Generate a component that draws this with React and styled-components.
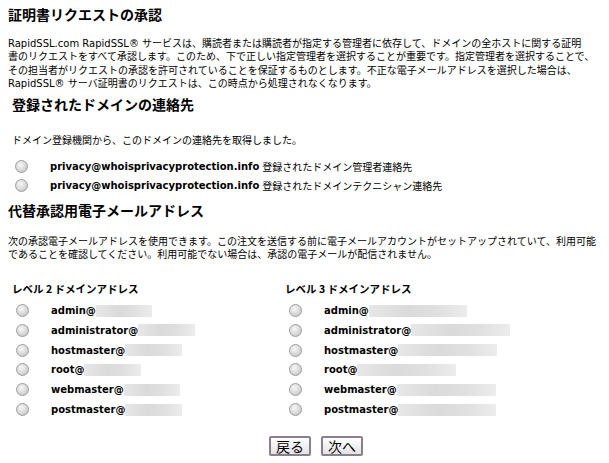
import React from 'react'
import styled, { createGlobalStyle } from 'styled-components'

/***************************************
  GLOBAL
***************************************/

const GlobalStyle = createGlobalStyle`
  html, body {
    margin: 0;
    padding: 0;
    background: #FFFFFF;
  }
  body {
    font-family: "DejaVu Sans", "Noto Sans CJK JP", sans-serif;
    font-size: 10px;
    color: #000000;
  }
`

/***************************************
  COMPONENTS
***************************************/

const Page = styled.div`
  width: 609px;
  height: 463px;
  padding: 6px 8px 0 8px;
  box-sizing: border-box;
`

const Heading = styled.div`
  font-family: "Noto Sans CJK JP", sans-serif;
  font-weight: 700;
  font-size: 14px;
  line-height: 17px;
  margin-top: ${(p) => p.$top || 0}px;
  padding-left: ${(p) => p.$indent || 0}px;
  white-space: nowrap;
`

const Para = styled.div`
  line-height: ${(p) => p.$lh || 13.4}px;
  margin-top: ${(p) => p.$top || 0}px;
  padding-left: ${(p) => p.$indent || 0}px;
  white-space: nowrap;
`

const RadioList = styled.div`
  display: flex;
  flex-direction: column;
  margin-top: ${(p) => p.$top || 0}px;
`

const Row = styled.div`
  display: flex;
  align-items: center;
  height: ${(p) => p.$h || 19}px;
  white-space: nowrap;
`

const Radio = styled.span`
  flex: none;
  width: 11px;
  height: 11px;
  border-radius: 50%;
  border: 1px solid #9d9d9d;
  background: radial-gradient(circle at 40% 35%, #f7f7f7 0%, #d8d8d8 55%, #bcbcbc 100%);
  margin-left: ${(p) => p.$left || 8}px;
  margin-right: ${(p) => p.$right || 23}px;
`

const Email = styled.span`
  font-weight: 700;
  color: #000000;
`

const Note = styled.span`
  margin-left: 3px;
`

const Blur = styled.span`
  display: inline-block;
  width: ${(p) => p.$w}px;
  height: 12px;
  vertical-align: middle;
  background: linear-gradient(90deg, #e7e7e7, #dadada 40%, #e0e0e0 70%, #ececec);
  filter: blur(0.7px);
`

const Columns = styled.div`
  display: grid;
  grid-template-columns: 273px 1fr;
  margin-top: 21px;
`

const ColTitle = styled.div`
  font-family: "Noto Sans CJK JP", "DejaVu Sans", sans-serif;
  font-weight: 700;
  font-size: 10.5px;
  line-height: 14px;
  padding-left: 4px;
  margin-bottom: 5px;
  white-space: nowrap;
`

const Actions = styled.div`
  display: flex;
  justify-content: center;
  gap: 10px;
  margin-top: 17px;
  padding-left: 23px;
`

const Button = styled.button`
  height: 20px;
  padding: 0 5px;
  border: 2px solid #8d7e8f;
  border-radius: 2px;
  background: linear-gradient(#ffffff, #f2f2f2 50%, #e2e2e2);
  font-family: "Noto Sans CJK JP", sans-serif;
  font-size: 14px;
  line-height: 16px;
  color: #000000;
  cursor: pointer;
`

/***************************************
  DATA
***************************************/

const level2 = [
  ['admin@', 56],
  ['administrator@', 57],
  ['hostmaster@', 57],
  ['root@', 57],
  ['webmaster@', 56],
  ['postmaster@', 57],
]

const level3 = [
  ['admin@', 98],
  ['administrator@', 99],
  ['hostmaster@', 99],
  ['root@', 99],
  ['webmaster@', 99],
  ['postmaster@', 98],
]

/***************************************
  MAIN
***************************************/

const AddressColumn = ({ title, items }) => (
  <div>
    <ColTitle>{title}</ColTitle>
    {items.map(([name, w]) => (
      <Row key={name} $h={19.8}>
        <Radio $left={8} $right={22} />
        <Email>{name}</Email>
        <Blur $w={w} />
      </Row>
    ))}
  </div>
)

const App = () => {
  return (
    <Page>
      <GlobalStyle />
      <Heading>証明書リクエストの承認</Heading>
      <Para $top={14}>
        RapidSSL.com RapidSSL® サービスは、購読者または購読者が指定する管理者に依存して、ドメインの全ホストに関する証明<br />
        書のリクエストをすべて承認します。このため、下で正しい指定管理者を選択することが重要です。指定管理者を選択することで、<br />
        その担当者がリクエストの承認を許可されていることを保証するものとします。不正な電子メールアドレスを選択した場合は、<br />
        RapidSSL® サーバ証明書のリクエストは、この時点から処理されなくなります。
      </Para>

      <Heading $top={5} $indent={4}>登録されたドメインの連絡先</Heading>
      <Para $top={21} $indent={4} $lh={13}>
        ドメイン登録機関から、このドメインの連絡先を取得しました。
      </Para>
      <RadioList $top={10}>
        <Row>
          <Radio $left={7} $right={22} />
          <Email>privacy@whoisprivacyprotection.info</Email>
          <Note>登録されたドメイン管理者連絡先</Note>
        </Row>
        <Row>
          <Radio $left={7} $right={22} />
          <Email>privacy@whoisprivacyprotection.info</Email>
          <Note>登録されたドメインテクニシャン連絡先</Note>
        </Row>
      </RadioList>

      <Heading $top={7}>代替承認用電子メールアドレス</Heading>
      <Para $top={16} $lh={13}>
        次の承認電子メールアドレスを使用できます。この注文を送信する前に電子メールアカウントがセットアップされていて、利用可能<br />
        であることを確認してください。利用可能でない場合は、承認の電子メールが配信されません。
      </Para>

      <Columns>
        <AddressColumn title='レベル 2 ドメインアドレス' items={level2} />
        <AddressColumn title='レベル 3 ドメインアドレス' items={level3} />
      </Columns>

      <Actions>
        <Button type='button'>戻る</Button>
        <Button type='button'>次へ</Button>
      </Actions>
    </Page>
  )
}

/**************************************/

export default App
